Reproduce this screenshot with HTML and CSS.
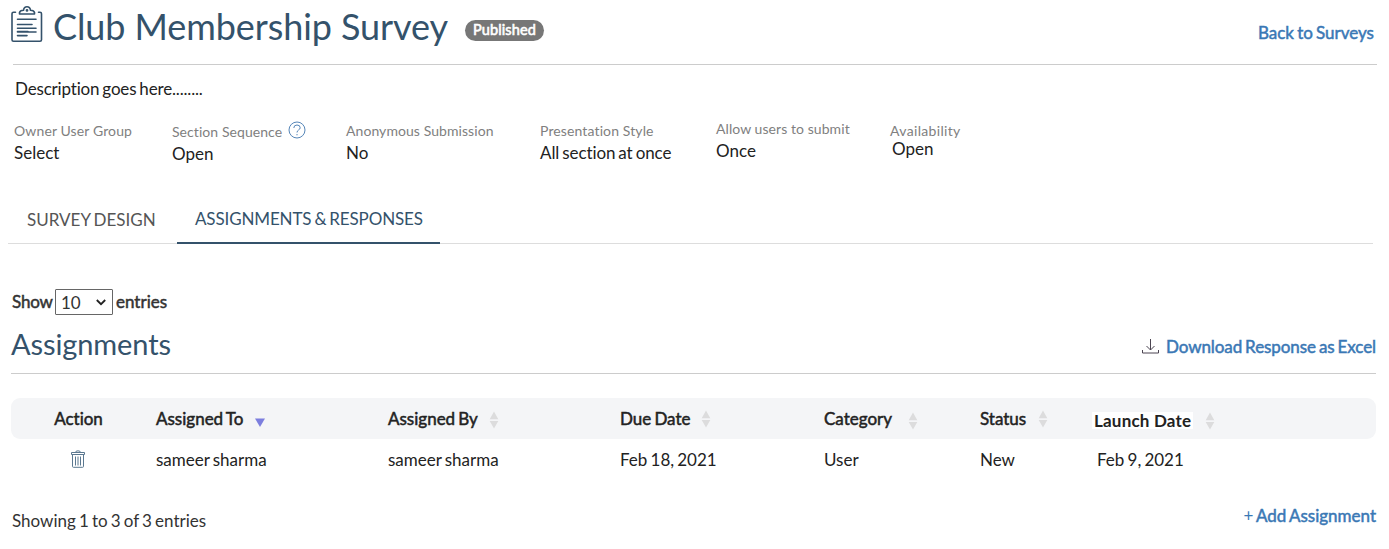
FILE: index.html
```
<!DOCTYPE html>
<html lang="en">
<head>
<meta charset="utf-8">
<title>Club Membership Survey</title>
<link rel="stylesheet" href="styles.css">
</head>
<body>
<svg class="defs" width="0" height="0">
  <symbol id="sort" viewBox="0 0 10 18"><path d="M5 0.5L9.3 8.3H0.7z M0.7 9.9H9.3L5 17.5z" fill="#dcdcdd"/></symbol>
</svg>
<header class="page-header">
  <svg class="clipboard" width="32" height="37" viewBox="0 0 32 37" fill="none" stroke="#34526b" stroke-width="1.6" stroke-linecap="round" stroke-linejoin="round">
    <path d="M4.500 6.200H2.500Q1 6.200 1 7.700V33.700Q1 35.200 2.500 35.200H29Q30.500 35.200 30.500 33.700V7.700Q30.500 6.200 29 6.200H27.500"/>
    <path d="M8.500 8V6.500Q9 4.500 12.500 4.300Q13 0.800 16 0.800T19.500 4.300Q23 4.500 23.500 6.500V8Z"/>
    <circle cx="16" cy="4.400" r="0.600"/>
    <path d="M6.500 13.300H25M6.500 18.500H21M6.500 22.200H25M6.500 25.500H17M6.500 26H25M6.500 29.600H16"/>
  </svg>
  <h1 class="title">Club Membership Survey</h1>
  <span class="badge">Published</span>
  <a class="link back">Back to Surveys</a>
</header>
<p class="description">Description goes here........</p>
<dl class="meta">
  <div class="item owner"><dt>Owner User Group</dt><dd>Select</dd></div>
  <div class="item sequence"><dt>Section Sequence
    <svg class="help" width="18" height="18" viewBox="0 0 18 18" fill="none" stroke="#5686b8" stroke-width="1"><circle cx="9" cy="9" r="8"/><path d="M5.800 7Q5.800 4 9 4T12.200 6.800C12.200 9 9 8.800 9 11.500M9 13V14.300"/></svg></dt><dd>Open</dd></div>
  <div class="item anonymous"><dt>Anonymous Submission</dt><dd>No</dd></div>
  <div class="item style"><dt>Presentation Style</dt><dd>All section at once</dd></div>
  <div class="item submit"><dt>Allow users to submit</dt><dd>Once</dd></div>
  <div class="item availability"><dt>Availability</dt><dd>Open</dd></div>
</dl>
<nav class="tabs">
  <a class="tab design">SURVEY DESIGN</a>
  <a class="tab active">ASSIGNMENTS &amp; RESPONSES</a>
</nav>
<div class="length">
  <span class="show">Show</span>
  <span class="select"><span>10</span><svg width="10" height="7" viewBox="0 0 10 7" fill="none" stroke="#222" stroke-width="1.800"><path d="M0.800 1L5 5.200L9.200 1"/></svg></span>
  <span class="entries">entries</span>
</div>
<section class="section-head">
  <h2 class="subtitle">Assignments</h2>
  <a class="link download"><svg width="17" height="15" viewBox="0 0 17 15" fill="none" stroke="#4c4552" stroke-width="1"><path d="M8.500 0V11M4.500 7L8.500 11L12.500 7M0.500 11V14H16.500V11"/></svg><span>Download Response as Excel</span></a>
</section>
<div class="table">
  <div class="row head">
    <span class="action">Action</span>
    <span class="h-to">Assigned To<svg class="desc" width="10" height="9"><path d="M0 0.500H10L5 9z" fill="#7c7ede"/></svg></span>
    <span class="h-by">Assigned By<svg class="sort"><use href="#sort"/></svg></span>
    <span class="h-due">Due Date<svg class="sort"><use href="#sort"/></svg></span>
    <span class="h-cat">Category<svg class="sort"><use href="#sort"/></svg></span>
    <span class="h-status">Status<svg class="sort"><use href="#sort"/></svg></span>
    <span class="h-launch"><b>Launch Date</b><svg class="sort"><use href="#sort"/></svg></span>
  </div>
  <div class="row body">
    <span class="action"><svg width="14" height="18" viewBox="0 0 14 18" fill="none" stroke="#5b7890" stroke-width="1"><path d="M0.500 4.500V2.500H13.500V4.500ZM4.500 2.500Q4.500 0.800 7 0.800T9.500 2.500M1.500 4.500V16.500Q1.500 17.300 2.500 17.300H11.500Q12.500 17.300 12.500 16.500V4.500M4.500 6.500V15.500M7 6.500V15.500M9.500 6.500V15.500"/></svg></span>
    <span>sameer sharma</span>
    <span>sameer sharma</span>
    <span>Feb 18, 2021</span>
    <span>User</span>
    <span>New</span>
    <span class="launch">Feb 9, 2021</span>
  </div>
</div>
<footer class="footer">
  <span class="info">Showing 1 to 3 of 3 entries</span>
  <a class="link add"><span class="plus">+</span> Add Assignment</a>
</footer>
</body>
</html>
```
FILE: styles.css
```
* { box-sizing: border-box; }
body {
  margin: 0;
  width: 1389px;
  height: 549px;
  overflow: hidden;
  background: #fff;
  color: #222;
  font: 17px/24px Lato, "Liberation Sans", sans-serif;
  font-variant-ligatures: none;
  word-spacing: -1.2px;
  white-space: nowrap;
}
h1, h2, p, dl, dd { margin: 0; font-weight: 400; }
.defs { position: absolute; }
.page-header {
  display: flex;
  align-items: flex-start;
  height: 65px;
  margin: 0 12px 0 13px;
  border-bottom: 1px solid #ccc;
}
.clipboard { margin: 6px 0 0 -2px; flex: none; }
.title { width: 397px; margin: 4px 0 0 10px; font-size: 36px; line-height: 44px; letter-spacing: -0.09px; word-spacing: 0; color: #34526b; }
.badge {
  width: 79px;
  height: 21px;
  margin: 20px 0 0 15px;
  border-radius: 11px;
  background: #777;
  color: #fff;
  font-size: 14.5px;
  line-height: 20px;
  letter-spacing: 0.1px;
  text-align: center;
  -webkit-text-stroke: 0.6px;
}
.link { color: #3a78b5; -webkit-text-stroke: 0.5px; }
.back { margin: 21px 3px 0 auto; }
.description { padding: 12px 0 0 15px; height: 54px; letter-spacing: -0.17px; }
.meta { display: grid; grid-template-columns: 158px 174px 194px 176px 174px 1fr; padding-left: 14px; height: 78px; }
.item dt { height: 22px; font-size: 14px; line-height: 24px; letter-spacing: 0.07px; word-spacing: 0; color: #808080; }
.owner dt, .style dt { letter-spacing: 0.12px; }
.style dd { letter-spacing: -0.1px; }
.sequence, .availability { padding-top: 1px; }
.sequence dt { display: flex; gap: 6px; }
.help { margin-top: 1px; }
.submit { margin-top: -2px; }
.availability { margin-top: -1px; }
.item.availability dt { letter-spacing: 0.33px; }
.availability dd { margin: -4px 0 0 2px; }
.tabs { display: flex; height: 47px; margin: 0 16px 0 8px; border-bottom: 1px solid #ddd; }
.tab { height: 47px; line-height: 43px; color: #555; }
.design { width: 169px; padding: 1px 0 0 19px; }
.active { width: 263px; padding-left: 18px; letter-spacing: -0.14px; color: #34526b; border-bottom: 2px solid #34526b; }
.length { display: flex; height: 26px; margin: 45px 0 0 12px; line-height: 26px; color: #333; }
.show, .entries { -webkit-text-stroke: 0.5px; }
.show { width: 43px; letter-spacing: -0.2px; }
.select {
  display: flex;
  justify-content: space-between;
  align-items: center;
  width: 58px;
  padding: 2px 6px 0 5px;
  margin-right: 3px;
  border: 1px solid #666;
  border-radius: 1px;
}
.select svg { margin-top: -2px; }
.section-head { display: flex; justify-content: space-between; height: 59px; margin: 0 13px 0 11px; border-bottom: 1px solid #ccc; }
.subtitle { padding-top: 11px; font-size: 29px; line-height: 36px; letter-spacing: -0.1px; color: #34526b; }
.download { display: flex; gap: 7px; padding-top: 20px; letter-spacing: -0.09px; }
.download svg { margin-top: 4px; }
.table { margin: 24px 13px 0 11px; }
.row { display: grid; grid-template-columns: 145px 232px 232px 204px 156px 114px 1fr; height: 41px; line-height: 41px; }
.head { border-radius: 9px; background: #f4f5f7; }
.head > span { display: flex; -webkit-text-stroke: 0.5px; }
.row .action { display: block; width: 135px; text-align: center; }
.body .action svg { display: block; margin: 11px 0 0 60px; }
.sort { width: 10px; height: 18px; margin: 12px 0 0 11px; -webkit-text-stroke: 0; }
.desc { margin: 20px 0 0 12px; }
.h-cat .sort { margin: 14px 0 0 16px; }
.h-by .sort { margin-top: 13px; }
.h-status .sort { margin-left: 12px; }
.h-launch b { height: 17px; margin: 14px 0 0 -2px; padding: 0 2px; line-height: 18px; letter-spacing: 0.2px; word-spacing: 0; background: #fff; font-weight: 700; -webkit-text-stroke: 0; }
.h-launch .sort { margin: 14px 0 0 12px; }
.launch { padding-left: 3px; }
.footer { display: flex; justify-content: space-between; margin: 24px 13px 0 12px; color: #333; }
.info { padding-top: 5px; }
.plus { -webkit-text-stroke: 0; }
```
